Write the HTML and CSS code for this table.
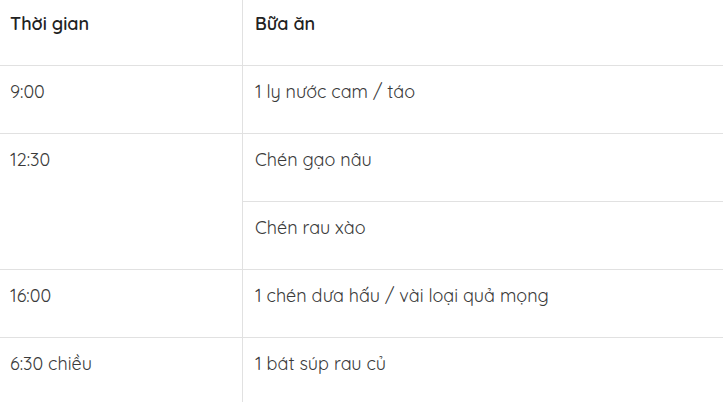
FILE: index.html
```html
<!DOCTYPE html>
<html lang="vi">
<head>
  <meta charset="UTF-8" />
  <meta name="viewport" content="width=device-width, initial-scale=1.0"/>
  <title>Thực đơn</title>
  <link rel="stylesheet" href="styles.css">
</head>
<body>

  <table class="meal-table">
    <thead>
      <tr>
        <th class="time">Thời gian</th>
        <th>Bữa ăn</th>
      </tr>
    </thead>
    <tbody>
      <tr>
        <td class="time">9:00</td>
        <td>1 ly nước cam / táo</td>
      </tr>
      <tr>
        <td class="time" rowspan="2">12:30</td>
        <td>Chén gạo nâu</td>
      </tr>
      <tr>
        <td>Chén rau xào</td>
      </tr>
      <tr>
        <td class="time">16:00</td>
        <td>1 chén dưa hấu / vài loại quả mọng</td>
      </tr>
      <tr>
        <td class="time">6:30 chiều</td>
        <td>1 bát súp rau củ</td>
      </tr>
    </tbody>
  </table>

</body>
</html>
```

FILE: styles.css
```css
body {
  margin: 0;
  font-family: "Quicksand", Lato, "Noto Sans", sans-serif;
  background: #fff;
  color: #3a3a3a;
}

.meal-table {
  width: 100%;
  border-collapse: collapse;
  font-size: 18px;
}

.meal-table th,
.meal-table td {
  text-align: left;
  vertical-align: top;
  line-height: 24px;
  padding: 14px 12px 29px;
  border-bottom: 1px solid #e1e1e1;
}

.meal-table th {
  padding-top: 12px;
  padding-bottom: 29px;
  font-weight: 600;
  color: #222;
}

.meal-table .time {
  width: 220px;
  padding-left: 10px;
  border-right: 1px solid #e1e1e1;
}
```
